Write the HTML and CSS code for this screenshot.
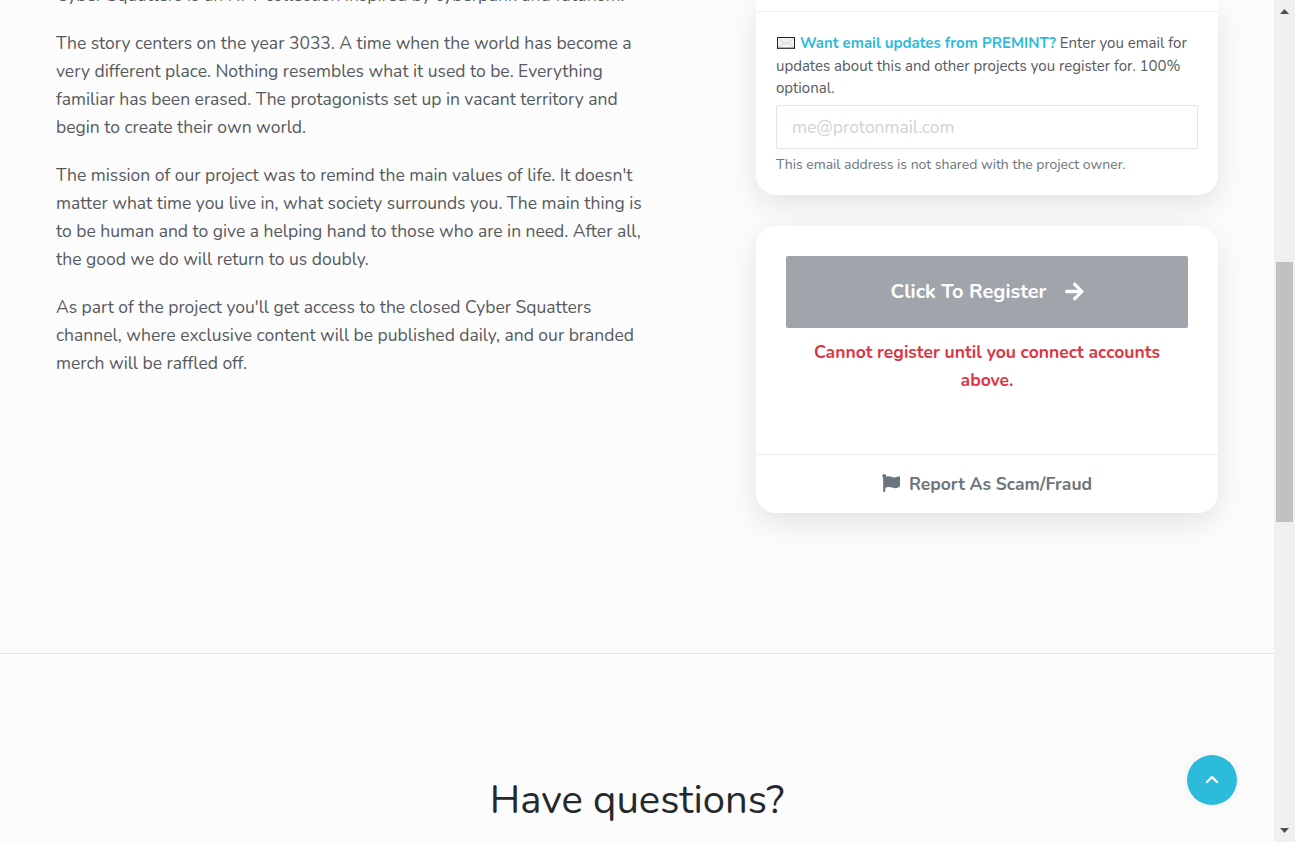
FILE: index.html
```html
<!DOCTYPE html>
<html lang="en">
<head>
<meta charset="utf-8">
<title>Cyber Squatters</title>
<link rel="stylesheet" href="styles.css">
</head>
<body>
<div class="window">
  <div class="page">
    <section class="project">
      <article class="about">
        <p>Cyber Squatters is an NFT collection inspired by cyberpunk and futurism.</p>
        <p>The story centers on the year 3033. A time when the world has become a<br>very different place. Nothing resembles what it used to be. Everything<br>familiar has been erased. The protagonists set up in vacant territory and<br>begin to create their own world.</p>
        <p>The mission of our project was to remind the main values of life. It doesn't<br>matter what time you live in, what society surrounds you. The main thing is<br>to be human and to give a helping hand to those who are in need. After all,<br>the good we do will return to us doubly.</p>
        <p>As part of the project you'll get access to the closed Cyber Squatters<br>channel, where exclusive content will be published daily, and our branded<br>merch will be raffled off.</p>
      </article>
      <aside class="side">
        <div class="card card-email">
          <div class="card-top"></div>
          <div class="email-body">
            <label class="email-label" for="email"><svg class="envelope" viewBox="0 0 18 12"><rect x=".5" y=".5" width="17" height="11" fill="#f1f1f1" stroke="#222"/><path d="M1 11h16" stroke="#666"/><path d="M2 2l6 4.5q1 .8 2 0L16 2M2 10l4.5-4M16 10l-4.5-4" fill="none" stroke="#ccc" stroke-width=".9"/></svg><b>Want email updates from PREMINT?</b> Enter you email for updates about this and other projects you register for. 100% optional.</label>
            <input class="email-input" id="email" type="email" placeholder="me@protonmail.com">
            <div class="help">This email address is not shared with the project owner.</div>
          </div>
        </div>
        <div class="card">
          <div class="register-body">
            <button class="register" disabled>Click To Register
              <svg class="arrow" viewBox="0 0 448 512"><path fill="currentColor" d="M190.5 66.9l22.2-22.2c9.4-9.4 24.6-9.4 33.9 0L441 239c9.4 9.4 9.4 24.6 0 33.9L246.6 467.3c-9.4 9.4-24.6 9.4-33.9 0l-22.2-22.2c-9.5-9.5-9.3-25 .4-34.3L311.4 296H24c-13.3 0-24-10.7-24-24v-32c0-13.3 10.7-24 24-24h287.4L190.9 101.2c-9.8-9.3-10-24.8-.4-34.3z"/></svg>
            </button>
            <div class="warning">Cannot register until you connect accounts above.</div>
          </div>
          <div class="report">
            <svg class="flag" viewBox="0 0 512 512"><path fill="currentColor" d="M349.565 98.783C295.978 98.783 251.721 64 184.348 64c-24.955 0-47.309 4.384-68.045 12.013a55.947 55.947 0 0 0 3.586-23.562C118.117 24.015 94.806 1.206 66.338.048 34.345-1.254 8 24.296 8 56c0 19.026 9.497 35.825 24 45.945V488c0 13.255 10.745 24 24 24h16c13.255 0 24-10.745 24-24v-94.4c28.311-12.064 63.582-22.122 114.435-22.122 53.588 0 97.844 34.783 165.217 34.783 48.169 0 86.667-16.294 122.505-40.858C506.84 359.452 512 349.571 512 339.045v-243.1c0-23.393-24.269-38.87-45.485-29.016-34.338 15.948-76.454 31.854-116.95 31.854z"/></svg>
            <span>Report As Scam/Fraud</span>
          </div>
        </div>
      </aside>
    </section>
    <section class="questions"><h2>Have questions?</h2></section>
  </div>
  <div class="scrollbar">
    <svg class="tri" viewBox="0 0 9 5"><path d="M0 5L4.5 0 9 5z" fill="#505050"/></svg>
    <div class="thumb"></div>
    <svg class="tri" viewBox="0 0 9 5"><path d="M0 0h9L4.5 5z" fill="#505050"/></svg>
  </div>
  <div class="to-top">
    <svg class="chevron" viewBox="0 0 14 9"><path d="M2 7l5-5 5 5" fill="none" stroke="#fff" stroke-width="2.4" stroke-linecap="round" stroke-linejoin="round"/></svg>
  </div>
</div>
</body>
</html>
```

FILE: styles.css
```css
* { box-sizing: border-box; }
body {
  margin: 0;
  font: 400 17.5px/28px Nunito, Lato, sans-serif;
  color: #565a5e;
  background: #fcfcfc;
  overflow: hidden;
}
.window { display: flex; height: 842px; overflow: hidden; position: relative; }
.page { flex: 1; }
.project {
  display: flex;
  justify-content: space-between;
  height: 654px;
  padding: 0 56px;
  border-bottom: 1px solid #e3e3e5;
}
.about { width: 600px; margin-top: -19px; white-space: nowrap; letter-spacing: -.01px; }
.about p { margin: 0 0 20px; }
.side { width: 462px; display: flex; flex-direction: column; gap: 31px; }
.card {
  background: #fff;
  border-radius: 20px;
  box-shadow: 0 10px 30px rgba(0, 0, 0, .1);
}
.card-email { border-radius: 0 0 20px 20px; height: 195px; }
.card-top { height: 12px; border-bottom: 1px solid #ededee; }
.email-body { padding: 20px 20px 0; }
.email-label { display: block; font-size: 15px; line-height: 22.5px; }
.email-label b { color: #2dbbdb; font-weight: 700; }
.envelope { width: 18px; height: 12px; margin: 0 5px 0 1px; vertical-align: -1px; }
.email-input {
  display: block;
  width: 422px;
  height: 44px;
  margin-top: 5.5px;
  padding: 0 15px;
  border: 1px solid #e2e3e5;
  border-radius: 2px;
  background: #fff;
  font: inherit;
}
.email-input::placeholder { color: #d2d2d2; opacity: 1; }
.help { margin-top: 5px; font-size: 14px; line-height: 21px; color: #6c757d; letter-spacing: -.015px; }
.register-body { height: 228px; padding: 30px 30px 0; }
.register {
  display: flex;
  align-items: center;
  justify-content: center;
  gap: 19px;
  width: 402px;
  height: 72px;
  padding: 0 0 0 1px;
  border: 0;
  border-radius: 2px;
  background: #a0a4ab;
  color: #fff;
  font: 700 20px/30px Nunito, Lato, sans-serif;
}
.arrow { width: 19px; height: 21px; margin-top: -2px; }
.warning { margin-top: 10px; text-align: center; font-weight: 700; color: #dc3545; }
.report {
  display: flex;
  align-items: center;
  justify-content: center;
  gap: 9px;
  height: 59px;
  border-top: 1px solid #ededee;
  color: #6c757d;
  font-weight: 700;
}
.flag { width: 18px; height: 18px; margin-top: -2px; }
.questions { padding-top: 120px; text-align: center; }
.questions h2 { margin: 0; font-size: 40px; line-height: 52px; font-weight: 400; color: #25292c; }
.scrollbar {
  display: flex;
  flex-direction: column;
  align-items: center;
  width: 21px;
  padding: 9px 2px;
  background: #f0f0f0;
}
.thumb { width: 17px; height: 260px; margin: 248px 0 306px; background: #c1c1c1; }
.tri { flex: none; width: 9px; height: 5px; }
.to-top {
  position: absolute;
  left: 1187px;
  top: 755px;
  display: flex;
  align-items: center;
  justify-content: center;
  width: 50px;
  height: 50px;
  padding: 0 1px 1px 0;
  border-radius: 50%;
  background: #2dbbdb;
  box-shadow: 0 0 20px rgba(0, 0, 0, .05);
}
.chevron { width: 14px; height: 9px; }
```
